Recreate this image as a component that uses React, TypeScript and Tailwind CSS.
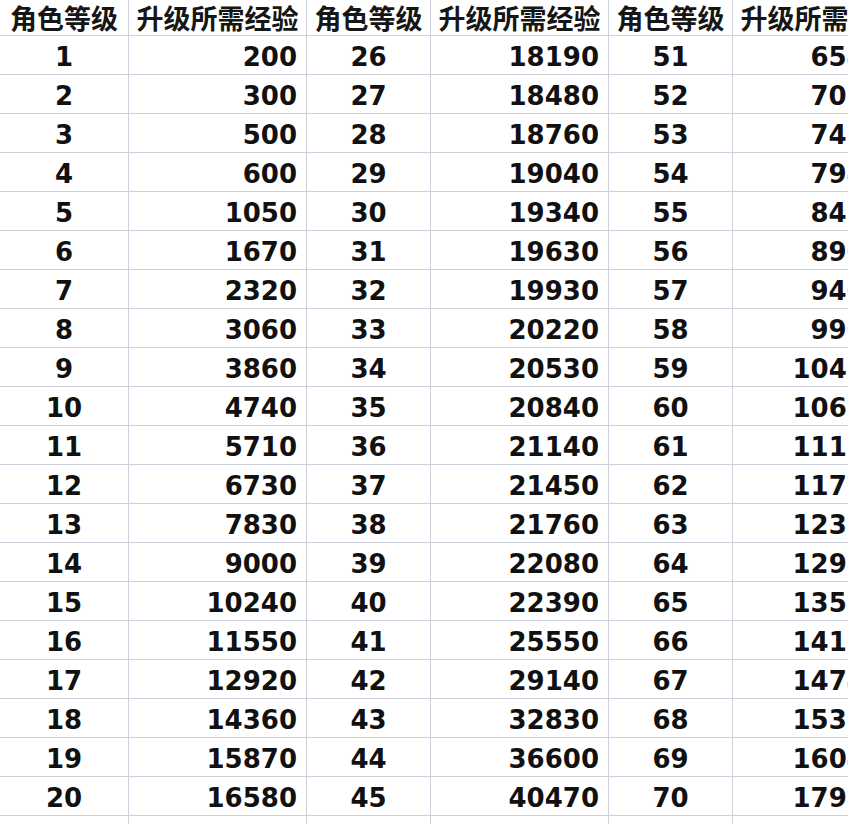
import React from 'react';

// exp needed per level, three groups of 20 side by side
const groupA = [200, 300, 500, 600, 1050, 1670, 2320, 3060, 3860, 4740, 5710, 6730, 7830, 9000, 10240, 11550, 12920, 14360, 15870, 16580];
const groupB = [18190, 18480, 18760, 19040, 19340, 19630, 19930, 20220, 20530, 20840, 21140, 21450, 21760, 22080, 22390, 25550, 29140, 32830, 36600, 40470];
const groupC = [65480, 70130, 74770, 79420, 84230, 89040, 94000, 99040, 104180, 106250, 111880, 117720, 123700, 129840, 135220, 141690, 147410, 153680, 160460, 179230];

const cell = 'border-r border-b border-[#cdd0dc] flex items-center';
const numCell = `${cell} h-[39px] pt-[3px] leading-none text-[26px] font-bold text-[#111] font-['DejaVu_Sans','Noto_Sans_CJK_SC',sans-serif]`;

function Header() {
  const labels = ['角色等级', '升级所需经验', '角色等级', '升级所需经验', '角色等级', '升级所需经验'];
  return (
    <>
      {labels.map((l, i) => (
        <div
          key={i}
          className={`${cell} h-[36px] justify-center whitespace-nowrap leading-[34px] text-[27px] font-bold text-[#161616] font-['Noto_Sans_CJK_SC','Noto_Sans',sans-serif]`}
        >
          {l}
        </div>
      ))}
    </>
  );
}

export default function App() {
  const rows = Array.from({ length: 20 }, (_, i) => i);
  return (
    <div className="w-[848px] h-[824px] overflow-hidden bg-white">
      <div className="grid grid-cols-[129px_178px_124px_178px_124px_178px] w-[911px]">
        <Header />
        {rows.map((i) => (
          <React.Fragment key={i}>
            <div className={`${numCell} justify-center`}>{i + 1}</div>
            <div className={`${numCell} justify-end pr-[9px]`}>{groupA[i]}</div>
            <div className={`${numCell} justify-center`}>{i + 26}</div>
            <div className={`${numCell} justify-end pr-[9px]`}>{groupB[i]}</div>
            <div className={`${numCell} justify-center`}>{i + 51}</div>
            <div className={`${numCell} justify-end pr-[9px]`}>{groupC[i]}</div>
          </React.Fragment>
        ))}
        {[0, 1, 2, 3, 4, 5].map((k) => (
          <div key={k} className={`${cell} h-[39px]`} />
        ))}
      </div>
    </div>
  );
}
